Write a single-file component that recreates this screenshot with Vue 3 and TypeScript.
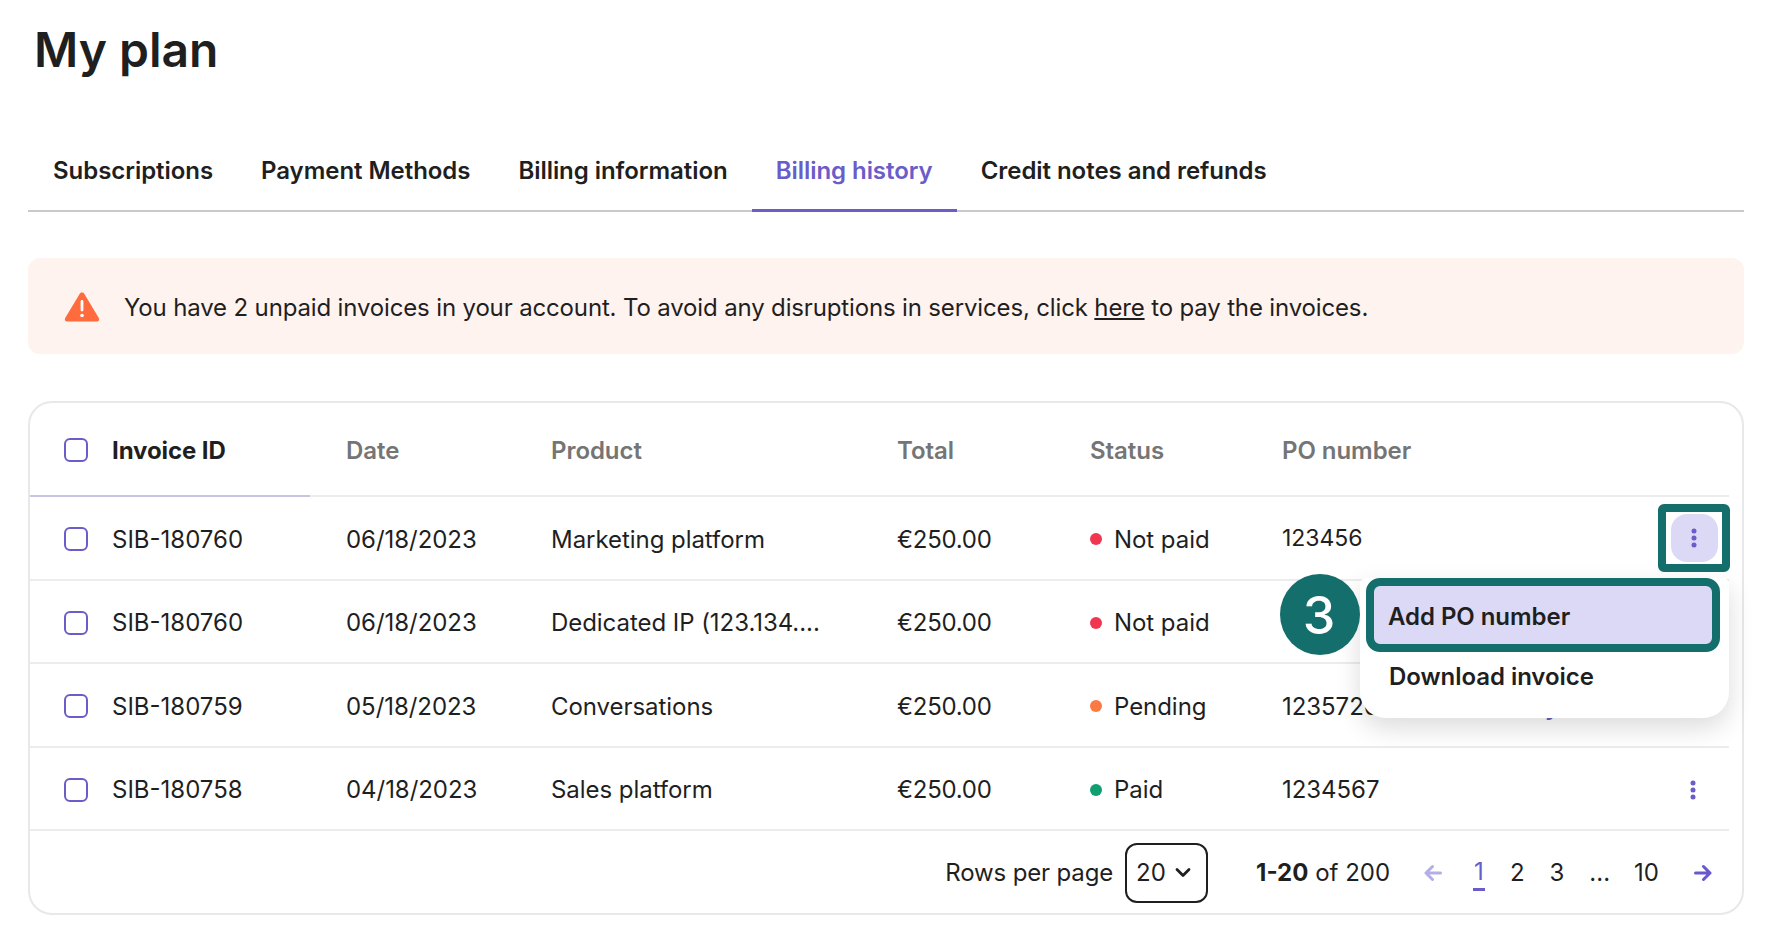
<script setup lang="ts">
interface Row { id: string; date: string; product: string; total: string; status: string; tone: string; po: string; link?: string; state: 'active' | 'none' | 'idle' }
const tabs = ['Subscriptions', 'Payment Methods', 'Billing information', 'Billing history', 'Credit notes and refunds']
const headers = ['Date', 'Product', 'Total', 'Status', 'PO number']
const rows: Row[] = [
  { id: 'SIB-180760', date: '06/18/2023', product: 'Marketing platform', total: '€250.00', status: 'Not paid', tone: 'red', po: '123456', state: 'active' },
  { id: 'SIB-180760', date: '06/18/2023', product: 'Dedicated IP (123.134....', total: '€250.00', status: 'Not paid', tone: 'red', po: '', state: 'none' },
  { id: 'SIB-180759', date: '05/18/2023', product: 'Conversations', total: '€250.00', status: 'Pending', tone: 'orange', po: '1235720', link: 'Pay', state: 'none' },
  { id: 'SIB-180758', date: '04/18/2023', product: 'Sales platform', total: '€250.00', status: 'Paid', tone: 'green', po: '1234567', state: 'idle' },
]
</script>

<template>
  <div class="page">
    <h1 class="title">My plan</h1>
    <nav class="tabs">
      <a v-for="t in tabs" :key="t" class="tab" :class="{ on: t === 'Billing history' }">{{ t }}</a>
    </nav>
    <div class="alert">
      <svg class="warn" width="36" height="31" viewBox="0 0 36 31">
        <path d="M18 1.5c1 0 1.9.5 2.4 1.4l14.4 24c1 1.7-.2 3.6-2.2 3.6H3.4c-2 0-3.2-1.9-2.2-3.6l14.4-24c.5-.9 1.400-1.400 2.400-1.400z" fill="#ff6b3d" />
        <rect x="16.600" y="9" width="2.800" height="11.500" rx="1.400" fill="#fff" />
        <circle class="bang" cx="18" cy="24.500" r="1.800" />
      </svg>
      <p>You have 2 unpaid invoices in your account. To avoid any disruptions in services, click <u>here</u> to pay the invoices.</p>
    </div>
    <section class="table">
      <div class="row head">
        <div class="cell first"><span class="check"></span><b>Invoice ID</b></div>
        <div v-for="h in headers" :key="h" class="cell">{{ h }}</div>
      </div>
      <div v-for="(r, i) in rows" :key="i" class="row body">
        <div class="cell first"><span class="check"></span>{{ r.id }}</div>
        <div class="cell">{{ r.date }}</div>
        <div class="cell">{{ r.product }}</div>
        <div class="cell money">{{ r.total }}</div>
        <div class="cell"><i class="dot" :class="r.tone"></i>{{ r.status }}</div>
        <div class="cell po">
          <span :class="{ small: r.state === 'active' }">{{ r.po }}</span>
          <a v-if="r.link" class="pay">{{ r.link }}</a>
          <span v-if="r.state === 'active'" class="ring">
            <span class="kebab-btn"><svg width="6" height="20" viewBox="0 0 6 20"><circle cx="3" cy="3" r="2.500" /><circle cx="3" cy="10" r="2.500" /><circle cx="3" cy="17" r="2.500" /></svg></span>
          </span>
          <span v-if="r.state === 'idle'" class="kebab"><svg width="6" height="20" viewBox="0 0 6 20"><circle cx="3" cy="3" r="2.500" /><circle cx="3" cy="10" r="2.500" /><circle cx="3" cy="17" r="2.500" /></svg></span>
        </div>
      </div>
      <footer class="foot">
        <span class="rpp">Rows per page</span>
        <span class="select">20<svg width="16" height="11" viewBox="0 0 16 11"><path d="M2 2.500l6 6 6-6" fill="none" stroke="#1f1f1f" stroke-width="2.800" stroke-linecap="round" stroke-linejoin="round" /></svg></span>
        <span class="count"><b>1-20</b> of 200</span>
        <svg class="arrow" width="18" height="18" viewBox="0 0 18 18"><path d="M16.500 9H2M8.500 2.500L2 9l6.500 6.500" fill="none" stroke="#b4aee8" stroke-width="3" stroke-linecap="round" stroke-linejoin="round" /></svg>
        <span class="pg cur">1</span>
        <span class="pg p2">2</span>
        <span class="pg p3">3</span>
        <span class="pg p3">...</span>
        <span class="pg p10">10</span>
        <svg class="arrow next" width="18" height="18" viewBox="0 0 18 18"><path d="M1.500 9H16M9.500 2.500L16 9l-6.500 6.500" fill="none" stroke="#6858d0" stroke-width="3" stroke-linecap="round" stroke-linejoin="round" /></svg>
      </footer>
      <div class="badge">3</div>
      <div class="menu">
        <div class="item hot">Add PO number</div>
        <div class="item">Download invoice</div>
      </div>
    </section>
  </div>
</template>

<style scoped>
.page {
  width: 1768px;
  height: 944px;
  box-sizing: border-box;
  padding: 21px 24px 0 28px;
  font-family: Inter, "Liberation Sans", sans-serif;
  color: #1f1f1f;
  background: #fff;
  overflow: hidden;
}
.title {
  margin: 0 0 49px 6px;
  font-size: 48px;
  line-height: 58px;
  font-weight: 600;
}
.tabs {
  display: flex;
  height: 84px;
  box-sizing: border-box;
  border-bottom: 2px solid #c9c9c9;
  padding-left: 1px;
}
.tab {
  padding: 0 24px;
  display: flex;
  align-items: center;
  height: 84px;
  box-sizing: border-box;
  font-size: 24px;
  font-weight: 600;
  letter-spacing: -0.05px;
  color: #1f1f1f;
}
.tab.on {
  color: #6a5cc9;
  box-shadow: inset 0 -3px 0 #6a5cc9;
}
.alert {
  margin-top: 46px;
  height: 96px;
  display: flex;
  align-items: center;
  gap: 24px;
  padding-left: 36px;
  border-radius: 12px;
  background: #fff3f0;
  font-size: 24px;
  letter-spacing: -0.15px;
}
.alert p { margin: 2px 0 0; }
.table {
  position: relative;
  margin-top: 47px;
  height: 514px;
  box-sizing: border-box;
  border: 2px solid #e8e8e8;
  border-radius: 24px;
  font-size: 24px;
}
.row {
  display: grid;
  grid-template-columns: 316px 205px 346px 193px 192px 1fr;
  height: 83.5px;
  margin-right: 13px;
  box-sizing: border-box;
  border-bottom: 2px solid #ececec;
}
.row.head {
  height: 94px;
  color: #757575;
  font-weight: 600;
}
.cell {
  display: flex;
  align-items: center;
  white-space: nowrap;
  letter-spacing: -0.05px;
}
.body .cell { padding-top: 3px; }
.first {
  padding-left: 34px;
  gap: 24px;
  letter-spacing: 0;
}
.head .first {
  width: 280px;
  height: 94px;
  box-sizing: border-box;
  padding-top: 2px;
  border-bottom: 2px solid #c9c6e4;
  color: #1f1f1f;
}
.head b { font-weight: 700; letter-spacing: -0.1px; }
.money { letter-spacing: -0.25px; }
.check {
  width: 24px;
  height: 24px;
  box-sizing: border-box;
  border: 2px solid #6a5cc9;
  border-radius: 6px;
  flex: none;
}
.dot {
  width: 12px;
  height: 12px;
  border-radius: 50%;
  margin-right: 12px;
}
.red { background: #f0374f; }
.orange { background: #fb7a42; }
.green { background: #0f9f70; }
.po { position: relative; }
.small { font-size: 23px; margin-bottom: 3px; }
.pay {
  margin-left: auto;
  margin-right: 170px;
  color: #6a5cc9;
  font-weight: 600;
}
.ring {
  position: absolute;
  right: -1px;
  top: 7px;
  width: 72px;
  height: 68px;
  box-sizing: border-box;
  border: 8px solid #146f6c;
  border-radius: 6px;
  display: flex;
  align-items: center;
  justify-content: center;
  background: #fff;
}
.kebab-btn {
  width: 47px;
  height: 48px;
  border-radius: 16px;
  background: #dcd9f7;
  display: flex;
  align-items: center;
  justify-content: center;
}
.kebab {
  position: absolute;
  right: 33px;
  top: 32px;
  display: flex;
}
svg circle { fill: #6a5cc9; }
svg .bang { fill: #fff; }
.foot {
  height: 82px;
  display: flex;
  align-items: center;
  justify-content: flex-end;
  padding-right: 30px;
  padding-top: 1px;
  box-sizing: border-box;
}
.rpp { letter-spacing: -0.15px; }
.select {
  margin-left: 12px;
  margin-right: 48px;
  width: 83px;
  height: 60px;
  box-sizing: border-box;
  border: 2px solid #1f1f1f;
  border-radius: 12px;
  display: flex;
  align-items: center;
  justify-content: space-between;
  padding: 0 15px 0 9px;
}
.count { margin-right: 34px; }
.count b { font-weight: 700; }
.pg { margin-left: 26px; }
.p2 { margin-left: 25px; }
.p3 { margin-left: 25px; }
.p10 { margin-left: 24px; }
.arrow { flex: none; margin-right: 7px; }
.arrow.next { margin-left: 35px; margin-right: 0; }
.cur {
  color: #6a5cc9;
  margin-left: 24px;
  box-shadow: 0 3px 0 #6a5cc9;
  padding: 0 1px 1px;
  line-height: 30px;
}
.badge {
  position: absolute;
  left: 1250px;
  top: 171px;
  width: 80px;
  height: 81px;
  box-sizing: border-box;
  padding: 2px 2px 0 0;
  border-radius: 50%;
  background: #146f6c;
  color: #fff;
  font-size: 52px;
  font-weight: 500;
  display: flex;
  align-items: center;
  justify-content: center;
  z-index: 3;
}
.menu {
  position: absolute;
  left: 1330px;
  top: 175px;
  width: 369px;
  height: 140px;
  box-sizing: border-box;
  background: #fff;
  border-radius: 6px 6px 26px 26px;
  box-shadow: 0 10px 26px rgba(0, 0, 0, 0.14);
  z-index: 2;
}
.item {
  font-weight: 600;
  padding-left: 29px;
  line-height: 30px;
  margin-top: 10px;
  letter-spacing: -0.05px;
}
.item.hot {
  margin: 0 9px 0 6px;
  height: 74px;
  box-sizing: border-box;
  border: 8px solid #146f6c;
  border-radius: 14px;
  background: #dcd9f7;
  display: flex;
  align-items: center;
  padding: 3px 0 0 14px;
}
</style>
